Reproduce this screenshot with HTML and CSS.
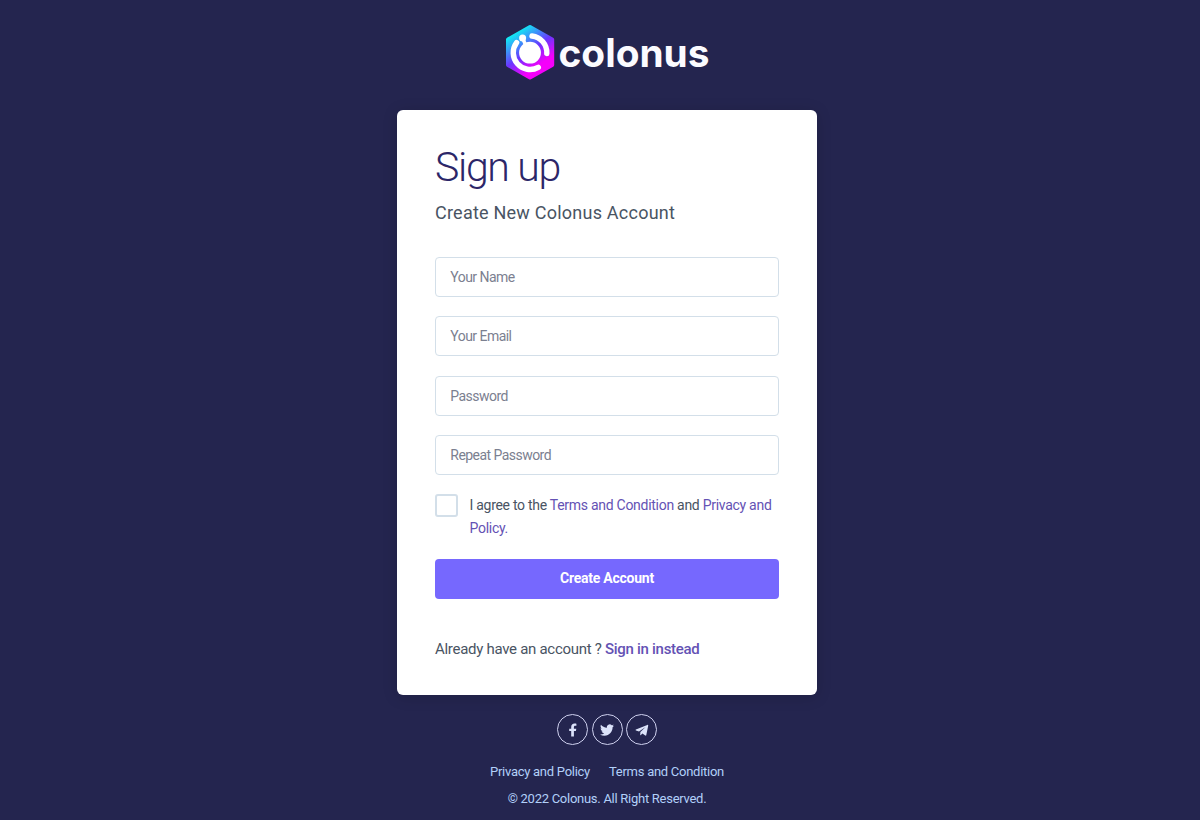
FILE: index.html
```html
<!DOCTYPE html>
<html lang="en">
<head>
    <meta charset="UTF-8">
    <meta name="viewport" content="width=device-width, initial-scale=1.0">
    <title>Sign up | Colonus</title>
    <link rel="stylesheet" href="styles.css">
</head>
<body>
    <header class="page-header">
        <a href="#" class="logo" aria-label="Colonus">
            <svg width="206" height="60" viewBox="0 0 206 60">
                <defs>
                    <linearGradient id="logoGradient" x1="0.15" y1="0" x2="0.75" y2="1">
                        <stop offset="0.1" stop-color="#12e6f4"/>
                        <stop offset="0.5" stop-color="#6a35ff"/>
                        <stop offset="0.8" stop-color="#f500fa"/>
                    </linearGradient>
                </defs>
                <path d="M26 5 L48.2 17.5 V43 L26 55.5 L4 43 V17.5 Z" fill="url(#logoGradient)" stroke="url(#logoGradient)" stroke-width="4" stroke-linejoin="round"/>
                <g fill="none" stroke="#fff" stroke-width="5.4" stroke-linecap="round">
                    <path d="M28 14 A16.8 16.8 0 0 1 42.8 31.5"/>
                    <path d="M12.6 20.6 A16.8 16.8 0 0 0 34.3 45.3"/>
                </g>
                <circle cx="26" cy="30.7" r="10.9" fill="#fff"/>
                <circle cx="18.6" cy="16" r="3.5" fill="#fff"/>
                <path d="M18.8 16.5 L22 24" stroke="#fff" stroke-width="3.4"/>
                <text class="logo-text" x="54.5" y="45" textLength="151" lengthAdjust="spacingAndGlyphs">colonus</text>
            </svg>
        </a>
    </header>

    <main class="card">
        <h1>Sign up</h1>
        <p class="subtitle">Create New Colonus Account</p>
        <form class="signup-form">
            <input type="text" class="field" placeholder="Your Name">
            <input type="email" class="field" placeholder="Your Email">
            <input type="password" class="field" placeholder="Password">
            <input type="password" class="field" placeholder="Repeat Password">
            <div class="agree">
                <input type="checkbox" class="checkbox" id="agree">
                <label for="agree">I agree to the <a href="#">Terms and Condition</a> and <a href="#">Privacy and Policy.</a></label>
            </div>
            <button type="submit" class="btn">Create Account</button>
        </form>
        <p class="signin">Already have an account ? <a href="#">Sign in instead</a></p>
    </main>

    <footer class="page-footer">
        <ul class="social">
            <li><a href="#" aria-label="Facebook">
                <svg width="14" height="14" viewBox="0 0 14 14"><path d="M5.2 13.6 V8 H3.2 V5.7 H5.2 V4 C5.2 1.8 6.5 .5 8.5 .5 C9.5 .5 10.4 .7 10.4 .7 V2.7 H9.2 C8.2 2.7 7.9 3.4 7.9 4.1 V5.7 H10.3 L9.9 8 H7.9 V13.6 Z"/></svg>
            </a></li>
            <li><a href="#" aria-label="Twitter">
                <svg width="14" height="14" viewBox="0 0 24 24"><path d="M23.95 4.57a10 10 0 0 1-2.82.77 4.96 4.96 0 0 0 2.16-2.72c-.95.55-2 .95-3.13 1.18a4.92 4.92 0 0 0-8.38 4.48C7.69 8.1 4.07 6.13 1.64 3.16a4.82 4.82 0 0 0-.67 2.48c0 1.71.87 3.21 2.19 4.1a4.9 4.9 0 0 1-2.23-.62v.06a4.92 4.92 0 0 0 3.95 4.83 5 5 0 0 1-2.21.08 4.94 4.94 0 0 0 4.6 3.42A9.87 9.87 0 0 1 0 19.54a13.99 13.99 0 0 0 7.56 2.21c9.05 0 14-7.5 14-13.98 0-.21 0-.42-.02-.63a9.94 9.94 0 0 0 2.41-2.57z"/></svg>
            </a></li>
            <li><a href="#" aria-label="Telegram">
                <svg width="14" height="14" viewBox="0 0 14 14"><path d="M12.3 1.9 L.9 6.6 C.4 6.9 .5 7.3 1 7.5 L4 8.4 L10.6 3.9 L5.4 8.9 L5.2 11.8 C5.2 12.4 5.6 12.3 5.9 12 L7.4 10.6 L10.3 12.6 C10.9 12.9 11.2 12.7 11.3 12.1 L13.2 2.7 C13.3 1.9 12.9 1.6 12.3 1.9 Z"/></svg>
            </a></li>
        </ul>
        <ul class="footer-links">
            <li><a href="#">Privacy and Policy</a></li>
            <li><a href="#">Terms and Condition</a></li>
        </ul>
        <p class="copyright">&copy; 2022 Colonus. All Right Reserved.</p>
    </footer>
</body>
</html>
```
FILE: styles.css
```css
* {
    box-sizing: border-box;
}

body, h1, p, ul {
    margin: 0;
    padding: 0;
}

body {
    display: flex;
    flex-direction: column;
    align-items: center;
    height: 820px;
    padding: 22px 0 0 14px;
    font-family: Roboto, sans-serif;
    color: #495463;
    background: #24254f;
    overflow: hidden;
}

a {
    color: #6452b4;
    text-decoration: none;
}

ul {
    list-style: none;
    display: flex;
}

/* Logo */
.logo {
    display: block;
    height: 60px;
}

.logo svg {
    display: block;
}

.logo-text {
    font-family: Inter, sans-serif;
    font-size: 39px;
    font-weight: 700;
    fill: #fbfbff;
}

/* Sign up card */
.card {
    width: 420.5px;
    height: 585px;
    margin-top: 28px;
    padding: 33px 38.25px 0;
    background: #fff;
    border-radius: 6px;
    box-shadow: 0 2px 15px rgba(0, 0, 0, 0.15);
}

h1 {
    font-size: 41px;
    font-weight: 300;
    line-height: 48px;
    letter-spacing: -1.3px;
    color: #2c2668;
}

.subtitle {
    margin-top: 9px;
    font-size: 18px;
    line-height: 26px;
    letter-spacing: 0.23px;
}

.signup-form {
    display: flex;
    flex-direction: column;
    margin-top: 31px;
}

.field {
    width: 100%;
    height: 40px;
    margin-bottom: 19.3px;
    padding: 0 14.3px;
    font-family: inherit;
    font-size: 14px;
    letter-spacing: -0.54px;
    color: #495463;
    background: #fff;
    border: 1px solid #d3dfe9;
    border-radius: 4px;
}

.field::placeholder {
    color: #7b8090;
}

.agree {
    display: flex;
    gap: 11.5px;
    font-size: 14px;
    line-height: 23px;
    letter-spacing: -0.28px;
}

.agree label {
    margin-top: -0.5px;
}

.checkbox {
    appearance: none;
    flex: none;
    width: 23px;
    height: 23px;
    margin: 0;
    border: 2px solid #d3dfe9;
    border-radius: 3px;
}

.btn {
    height: 40px;
    margin-top: 19px;
    padding-bottom: 3px;
    font-family: inherit;
    font-size: 14px;
    font-weight: 700;
    letter-spacing: -0.25px;
    color: #fff;
    background: #7668fe;
    border: none;
    border-radius: 4px;
}

.signin {
    margin-top: 38px;
    font-size: 15px;
    line-height: 24px;
    letter-spacing: -0.29px;
}

.signin a {
    font-weight: 500;
}

/* Footer */
.page-footer {
    display: flex;
    flex-direction: column;
    align-items: center;
    padding-top: 19px;
    font-size: 13px;
    line-height: 20px;
    letter-spacing: -0.27px;
    color: #b2d0f9;
}

.social {
    gap: 3.5px;
    padding-left: 1px;
}

.social a {
    display: flex;
    align-items: center;
    justify-content: center;
    width: 31px;
    height: 31px;
    border: 1px solid #ced0ee;
    border-radius: 50%;
}

.social svg {
    fill: #dce3fa;
}

.footer-links {
    gap: 19px;
    margin-top: 17px;
}

.footer-links a {
    color: #b2d0f9;
}

.copyright {
    margin-top: 7px;
}
```
